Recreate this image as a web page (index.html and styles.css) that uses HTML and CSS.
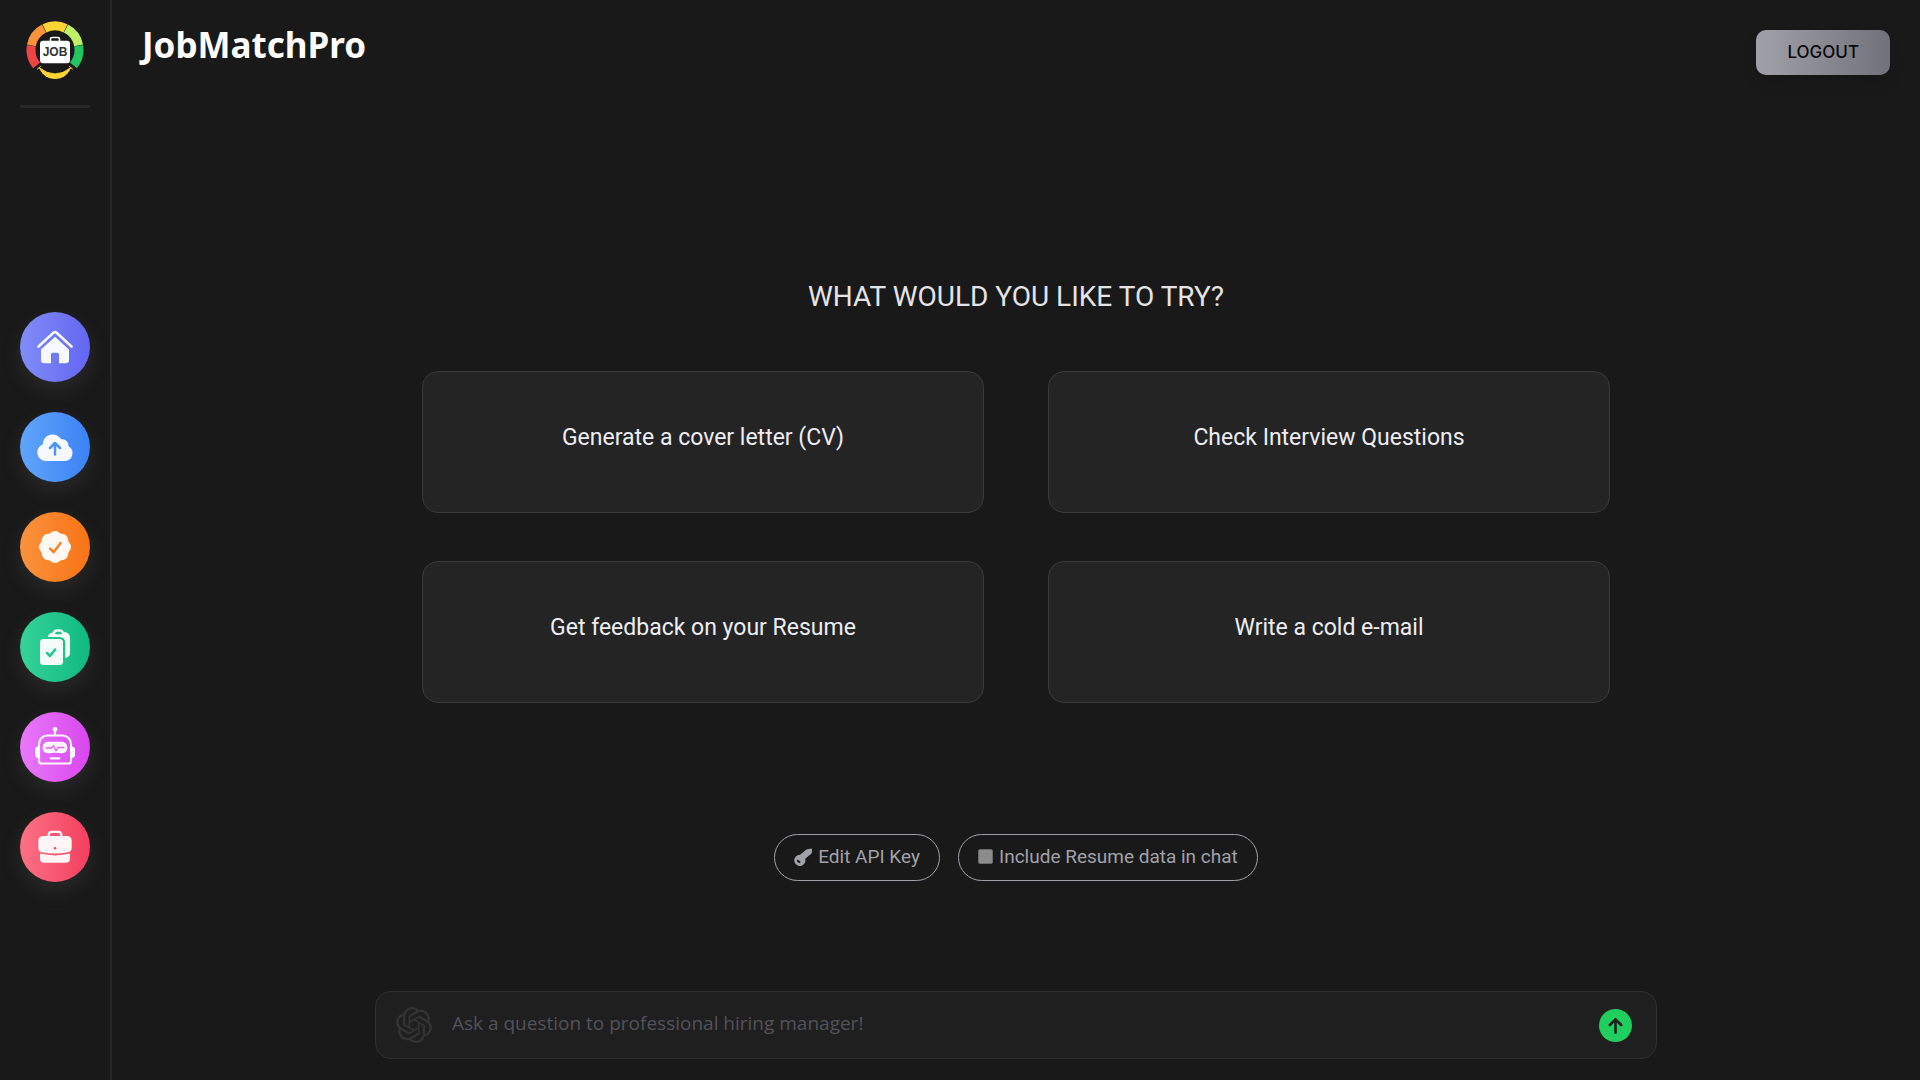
FILE: index.html
```html
<!DOCTYPE html>
<html lang="en">
<head>
    <meta charset="UTF-8">
    <meta name="viewport" content="width=device-width, initial-scale=1.0">
    <title>JobMatchPro</title>
    <link rel="stylesheet" href="styles.css">
</head>
<body>
    <aside class="sidebar">
        <a href="#" class="logo" aria-label="JobMatchPro">
            <svg viewBox="0 0 60 60">
                <g fill="none" stroke-width="9">
                    <path stroke="#ef4444" d="M11.6 45.4A24 24 0 0 1 6.4 25.8"/>
                    <path stroke="#fb923c" d="M6.4 25.3A24 24 0 0 1 19 8.6"/>
                    <path stroke="#fcd535" d="M19.5 8.4A24 24 0 0 1 40.5 8.4"/>
                    <path stroke="#bef264" d="M41 8.6A24 24 0 0 1 53.6 25.3"/>
                    <path stroke="#22c55e" d="M53.6 25.8A24 24 0 0 1 48.4 45.4"/>
                </g>
                <path d="M25.5 21v-2a1.5 1.5 0 0 1 1.5-1.5h6a1.5 1.5 0 0 1 1.5 1.5v2" fill="none" stroke="#fff" stroke-width="1.6"/>
                <rect x="15" y="20.7" width="30" height="22.6" rx="3" fill="#fff"/>
                <text class="logo-text" x="30" y="36" text-anchor="middle">JOB</text>
                <path d="M14.5 48Q30 60 45.5 48Q41 58.5 30 58.5T14.5 48z" fill="#fcd535"/>
                <path d="M14.5 48Q19 58.5 30 58.5T45.5 48Q30 60 14.5 48zM12.500 49l3-2.500M47.500 49l-3-2.500" fill="#fcd535" stroke="#fcd535" stroke-linecap="round"/>
            </svg>
        </a>
        <hr class="divider">

        <nav class="nav">
            <a href="#" class="nav-link home" aria-label="Home">
                <svg viewBox="0 0 70 70">
                    <path d="M18.5 34.5L33.7 20.6q1.3-1.1 2.6 0L51.5 34.5" fill="none" stroke="currentColor" stroke-width="2.6" stroke-linecap="round"/>
                    <path d="M35 24.7L49 37.5v10.5a3.3 3.3 0 0 1-3.3 3.3H39v-8.8a1.8 1.8 0 0 0-1.8-1.8h-4.4a1.8 1.8 0 0 0-1.8 1.8v8.8h-6.7a3.3 3.3 0 0 1-3.3-3.3V37.5z"/>
                </svg>
            </a>
            <a href="#" class="nav-link upload" aria-label="Upload resume">
                <svg viewBox="0 0 70 70">
                    <path d="M26 49a8.6 8.6 0 0 1-3.3-16.6A10 10 0 0 1 41.3 27.3A6.3 6.3 0 0 1 48.6 34.3A7.9 7.9 0 0 1 45 49z"/>
                    <path class="mark" d="M35 42.5V31.500M30 36l5-5 5 5"/>
                </svg>
            </a>
            <a href="#" class="nav-link score" aria-label="Resume score">
                <svg viewBox="0 0 70 70">
                    <circle cx="35" cy="35" r="14.6"/>
                    <circle cx="35" cy="25.5" r="6.5"/>
                    <circle cx="41.7" cy="28.3" r="6.5"/>
                    <circle cx="44.5" cy="35" r="6.5"/>
                    <circle cx="41.7" cy="41.7" r="6.5"/>
                    <circle cx="35" cy="44.5" r="6.5"/>
                    <circle cx="28.3" cy="41.7" r="6.5"/>
                    <circle cx="25.5" cy="35" r="6.5"/>
                    <circle cx="28.3" cy="28.3" r="6.5"/>
                    <path class="mark" d="M30 36.7l3.7 3.5 6.8-9.2"/>
                </svg>
            </a>
            <a href="#" class="nav-link match" aria-label="Job match">
                <svg viewBox="0 0 70 70">
                    <path fill-rule="evenodd" d="M27.7 25q.8-4 5-4.6Q34 17.3 37 17.3h3q3 0 4 2.7 6 .3 6 6V41q0 4-4.7 5V31q0-6-6-6zM36 22.2h5q1 0 1-.8-.6-1.6-2-1.6h-3q-1.4 0-2 1.6 0 .8 1 .8z"/>
                    <rect x="20" y="27" width="23" height="26" rx="3.5"/>
                    <path class="mark" d="M27 41l3 3 5.2-6.5"/>
                </svg>
            </a>
            <a href="#" class="nav-link chat" aria-label="AI chat">
                <svg viewBox="0 0 70 70">
                    <circle cx="35" cy="17.3" r="2.4"/>
                    <path d="M35 18v5M27.5 23.5h15a8.5 8.5 0 0 1 8.5 8.5v17a2.5 2.5 0 0 1-2.5 2.5h-27a2.5 2.5 0 0 1-2.5-2.5V32a8.5 8.5 0 0 1 8.5-8.5zM30.7 46.3h8.6" fill="none" stroke="currentColor" stroke-width="2.2" stroke-linecap="round"/>
                    <path d="M18.5 34.5v11.5q-3.5 0-3.5-3v-5.5q0-3 3.5-3zM51.5 34.5v11.5q3.5 0 3.5-3v-5.5q0-3-3.5-3z"/>
                    <path d="M29 29.7h12q6.3 0 6.3 5.5v1q0 5-6 5-6.3-1-12.6 0-6 0-6-5v-1q0-5.5 6.3-5.5z"/>
                    <path class="mark thin" d="M26 36h5.5l2-2.3 2.5 5 2-3.2h6"/>
                </svg>
            </a>
            <a href="#" class="nav-link jobs" aria-label="Jobs">
                <svg viewBox="0 0 70 70">
                    <path d="M28.7 25v-2q0-3.2 3.2-3.2h6.2q3.2 0 3.2 3.2v2" fill="none" stroke="currentColor" stroke-width="2.3"/>
                    <path d="M23.8 24h22.900q5 0 5 5v7q0 3.500-3.700 4.300-13 2.600-26 0-3.700-.8-3.700-4.300v-7q0-5 5.500-5z"/>
                    <path d="M20 41.600q15 3.600 30 0v4.900q0 4.300-4.500 4.300h-21q-4.500 0-4.500-4.300z"/>
                    <circle cx="35" cy="36.3" r="1.2" fill="#f43f5e"/>
                </svg>
            </a>
        </nav>
    </aside>

    <main class="main">
        <header class="header">
            <h1 class="brand">JobMatchPro</h1>
            <button type="button" class="logout">LOGOUT</button>
        </header>

        <section class="suggestions">
            <h2 class="title">WHAT WOULD YOU LIKE TO TRY?</h2>
            <div class="cards">
                <button type="button" class="card">Generate a cover letter (CV)</button>
                <button type="button" class="card">Check Interview Questions</button>
                <button type="button" class="card">Get feedback on your Resume</button>
                <button type="button" class="card">Write a cold e-mail</button>
            </div>
        </section>

        <div class="options">
            <button type="button" class="pill">
                <svg class="key-icon" viewBox="0 0 18 18">
                    <path fill-rule="evenodd" d="M12.5 1.5L17 .5q1 0 1 1V4q0 1-.8 1.800L11.200 10.800A5.600 5.600 0 1 1 6 6.800zM3.500 11.500q-1 .9-.3 1.900l1.400 1.400q.8.500 1.500-.1.700-.8 0-1.500z"/>
                </svg>
                Edit API Key
            </button>
            <label class="pill" for="include-resume">
                <input type="checkbox" id="include-resume" class="check">
                Include Resume data in chat
            </label>
        </div>

        <form class="ask">
            <svg class="ai-icon" viewBox="0 0 24 24">
                <path d="M22.2819 9.8211a5.9847 5.9847 0 0 0-.5157-4.9108 6.0462 6.0462 0 0 0-6.5098-2.9A6.0651 6.0651 0 0 0 4.9807 4.1818a5.9847 5.9847 0 0 0-3.9977 2.9 6.0462 6.0462 0 0 0 .7427 7.0966 5.98 5.98 0 0 0 .511 4.9107 6.051 6.051 0 0 0 6.5146 2.9001A5.9847 5.9847 0 0 0 13.2599 24a6.0557 6.0557 0 0 0 5.7718-4.2058 5.9894 5.9894 0 0 0 3.9977-2.9001 6.0557 6.0557 0 0 0-.7475-7.0729zm-9.022 12.6081a4.4755 4.4755 0 0 1-2.8764-1.0408l.1419-.0804 4.7783-2.7582a.7948.7948 0 0 0 .3927-.6813v-6.7369l2.02 1.1686a.071.071 0 0 1 .038.052v5.5826a4.504 4.504 0 0 1-4.4945 4.4944zm-9.6607-4.1254a4.4708 4.4708 0 0 1-.5346-3.0137l.142.0852 4.783 2.7582a.7712.7712 0 0 0 .7806 0l5.8428-3.3685v2.3324a.0804.0804 0 0 1-.0332.0615L9.74 19.9502a4.4992 4.4992 0 0 1-6.1408-1.6464zM2.3408 7.8956a4.485 4.485 0 0 1 2.3655-1.9728V11.6a.7664.7664 0 0 0 .3879.6765l5.8144 3.3543-2.0201 1.1685a.0757.0757 0 0 1-.071 0l-4.8303-2.7865A4.504 4.504 0 0 1 2.3408 7.872zm16.5963 3.8558L13.1038 8.364 15.1192 7.2a.0757.0757 0 0 1 .071 0l4.8303 2.7913a4.4944 4.4944 0 0 1-.6765 8.1042v-5.6772a.79.79 0 0 0-.407-.667zm2.0107-3.0231l-.142-.0852-4.7735-2.7818a.7759.7759 0 0 0-.7854 0L9.409 9.2297V6.8974a.0662.0662 0 0 1 .0284-.0615l4.8303-2.7866a4.4992 4.4992 0 0 1 6.6802 4.66zM8.3065 12.863l-2.02-1.1638a.0804.0804 0 0 1-.038-.0567V6.0742a4.4992 4.4992 0 0 1 7.3757-3.4537l-.142.0805L8.704 5.459a.7948.7948 0 0 0-.3927.6813zm1.0976-2.3654l2.602-1.4998 2.6069 1.4998v2.9994l-2.5974 1.4997-2.6067-1.4997Z"/>
            </svg>
            <input type="text" class="ask-input" placeholder="Ask a question to professional hiring manager!" aria-label="Ask a question">
            <button type="submit" class="send" aria-label="Send">
                <svg viewBox="0 0 32 32">
                    <path d="M16 23V10M10.500 15.500L16 10l5.500 5.500"/>
                </svg>
            </button>
        </form>
    </main>
</body>
</html>
```

FILE: styles.css
```css
* {
    box-sizing: border-box;
}

body {
    display: flex;
    min-height: 100vh;
    margin: 0;
    background-color: #191919;
    color: #e4e4e7;
    font-family: "Noto Sans", sans-serif;
}

button,
input {
    font-family: inherit;
}

button {
    cursor: pointer;
}

/* Sidebar */
.sidebar {
    display: flex;
    flex-direction: column;
    align-items: center;
    flex-shrink: 0;
    width: 112px;
    padding: 20px 20px 0;
    border-right: 2px solid #272727;
}

.logo,
.logo svg {
    display: block;
    width: 60px;
    height: 60px;
}

.logo-text {
    font: bold 12px "Liberation Sans", sans-serif;
    fill: #333;
}

.divider {
    width: 100%;
    height: 3px;
    margin: 25px 0 6px;
    border: none;
    background-color: #272727;
}

.nav {
    display: flex;
    flex: 1;
    flex-direction: column;
    justify-content: center;
    gap: 30px;
}

.nav-link {
    width: 70px;
    height: 70px;
    border-radius: 50%;
    color: rgba(255, 255, 255, 0.95);
    box-shadow: 0 8px 20px rgba(113, 113, 122, 0.2);
}

.nav-link svg {
    display: block;
    fill: currentColor;
}

.nav-link .mark {
    fill: none;
    stroke: var(--mark);
    stroke-width: 2.5;
    stroke-linecap: round;
    stroke-linejoin: round;
}

.nav-link .thin {
    stroke-width: 1.3;
}

.home {
    background: linear-gradient(to right, #818cf8, #6366f1);
}

.upload {
    --mark: #4c94f8;
    background: linear-gradient(to right, #60a5fa, #3b82f6);
}

/* the badge is built from overlapping circles, so it stays opaque */
.score {
    --mark: #fa832a;
    background: linear-gradient(to right, #fb923c, #f97316);
    color: #fff8f3;
}

.match {
    --mark: #25c78d;
    background: linear-gradient(to right, #34d399, #10b981);
}

.chat {
    --mark: #e15ff5;
    background: linear-gradient(to right, #e879f9, #d946ef);
    color: #fdf5fe;
}

.jobs {
    background: linear-gradient(to right, #fb7185, #f43f5e);
    color: #fff5f6;
}

/* Main area */
.main {
    display: flex;
    flex: 1;
    flex-direction: column;
    align-items: center;
    min-width: 0;
    padding: 0 30px 21px;
}

.header {
    display: flex;
    align-items: flex-start;
    justify-content: space-between;
    width: 100%;
    padding-top: 23px;
}

.brand {
    margin: 0;
    color: #fff;
    font-size: 35px;
    line-height: 44px;
}

.logout {
    height: 45px;
    margin-top: 7px;
    padding: 0 31px 2px;
    border: none;
    border-radius: 10px;
    background: linear-gradient(to right, #a1a1aa, #71717a);
    box-shadow: 0 10px 15px rgba(0, 0, 0, 0.1);
    color: #09090b;
    font: 500 17px Inter, sans-serif;
}

.suggestions {
    width: 100%;
    max-width: 1188px;
    margin: auto 0;
    padding-top: 72px;
    text-align: center;
}

.title {
    margin: 0 0 56px;
    font: 400 28px/36px Roboto, sans-serif;
}

.cards {
    display: grid;
    grid-template-columns: 1fr 1fr;
    gap: 48px 64px;
}

.card {
    height: 142px;
    padding: 0 20px 8px;
    border: 1px solid #3a3a3a;
    border-radius: 16px;
    background-color: #242424;
    color: #ededf5;
    font: 400 23px Roboto, sans-serif;
}

.options {
    display: flex;
    gap: 18px;
    margin-bottom: 110px;
}

.pill {
    display: flex;
    align-items: center;
    gap: 6px;
    height: 47px;
    padding: 0 19px 2px;
    border: 1px solid #a1a1aa;
    border-radius: 24px;
    background: none;
    color: #a1a1aa;
    font: 400 19px Roboto, sans-serif;
    cursor: pointer;
}

.key-icon {
    width: 18px;
    height: 18px;
    fill: #a1a1aa;
}

.check {
    appearance: none;
    width: 15px;
    height: 15px;
    margin: 0;
    border: 1px solid #6b6b6b;
    border-radius: 2px;
    background-color: #8c8c8c;
}

.check:checked {
    background-color: #1ed760;
}

.ask {
    display: flex;
    align-items: center;
    width: 100%;
    max-width: 1282px;
    height: 68px;
    padding: 0 24px 0 20px;
    border: 1px solid #303030;
    border-radius: 16px;
    background-color: #1f1f1f;
}

.ai-icon {
    flex-shrink: 0;
    width: 36px;
    height: 36px;
    fill: #333;
}

.ask-input {
    flex: 1;
    min-width: 0;
    padding: 0 20px 4px;
    border: none;
    outline: none;
    background: none;
    color: #e4e4e7;
    font-family: "Open Sans", sans-serif;
    font-size: 19px;
}

.ask-input::placeholder {
    color: #52525b;
}

.send {
    width: 33px;
    height: 33px;
    padding: 0;
    border: none;
    border-radius: 50%;
    background-color: #1fce5e;
}

.send svg {
    display: block;
    fill: none;
    stroke: #1f1f1f;
    stroke-width: 2.5;
    stroke-linecap: round;
    stroke-linejoin: round;
}
```
